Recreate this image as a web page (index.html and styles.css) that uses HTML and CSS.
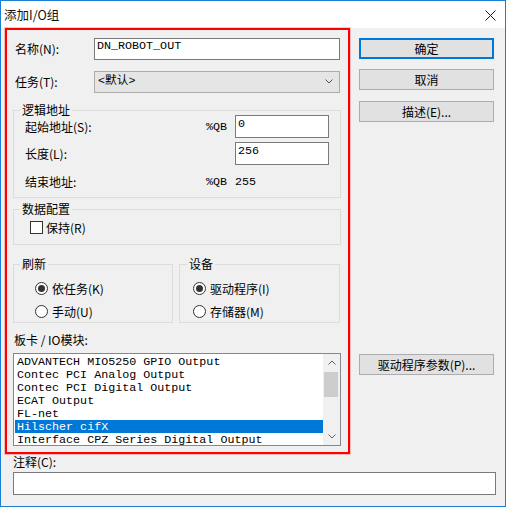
FILE: index.html
```html
<!DOCTYPE html>
<html lang="zh-CN">
<head>
<meta charset="utf-8">
<title>添加I/O组</title>
<link rel="stylesheet" href="styles.css">
</head>
<body>
<div class="window">
  <div class="titlebar">
    <span class="title">添加I/O组</span>
    <svg class="close" width="11" height="11" viewBox="0 0 11 11"><path d="M0.5 0.5L10.5 10.5M10.5 0.5L0.5 10.5" stroke="#1a1a1a" stroke-width="1"/></svg>
  </div>
  <div class="client">
    <div class="top">
      <div class="panel">
        <div class="field">
          <span class="lbl">名称(N):</span>
          <div class="input name-input mono">DN_ROBOT_OUT</div>
        </div>
        <div class="field task-field">
          <span class="lbl">任务(T):</span>
          <div class="combo"><span class="mono">&lt;默认&gt;</span><svg class="chev" width="8" height="5" viewBox="0 0 8 5"><path d="M0.5 0.5L4 4L7.5 0.5" fill="none" stroke="#555" stroke-width="1"/></svg></div>
        </div>

        <div class="group g-logic">
          <div class="gtitle">逻辑地址</div>
          <div class="addr-row r1"><span>起始地址(S):</span><span class="mono">%QB</span><div class="input small mono">0</div></div>
          <div class="addr-row r2"><span>长度(L):</span><span></span><div class="input small mono">256</div></div>
          <div class="addr-row r3"><span>结束地址:</span><span class="mono">%QB</span><span class="mono val">255</span></div>
        </div>

        <div class="group g-data">
          <div class="gtitle">数据配置</div>
          <div class="opt check-row"><span class="checkbox"></span><span>保持(R)</span></div>
        </div>

        <div class="group-pair">
          <div class="group g-refresh">
            <div class="gtitle">刷新</div>
            <div class="opt radio-row first"><span class="radio on"></span><span>依任务(K)</span></div>
            <div class="opt radio-row"><span class="radio"></span><span>手动(U)</span></div>
          </div>
          <div class="group g-device">
            <div class="gtitle">设备</div>
            <div class="opt radio-row first"><span class="radio on"></span><span>驱动程序(I)</span></div>
            <div class="opt radio-row"><span class="radio"></span><span>存储器(M)</span></div>
          </div>
        </div>

        <div class="list-label">板卡 / IO模块:</div>
        <div class="listbox">
          <div class="items mono">
            <div class="item">ADVANTECH MIO5250 GPIO Output</div>
            <div class="item">Contec PCI Analog Output</div>
            <div class="item">Contec PCI Digital Output</div>
            <div class="item">ECAT Output</div>
            <div class="item">FL-net</div>
            <div class="item sel">Hilscher cifX</div>
            <div class="item">Interface CPZ Series Digital Output</div>
          </div>
          <div class="vscroll">
            <div class="sb-btn"><svg width="8" height="5" viewBox="0 0 8 5"><path d="M0.5 4.5L4 1L7.5 4.5" fill="none" stroke="#606060" stroke-width="1"/></svg></div>
            <div class="sb-track"><div class="sb-thumb"></div></div>
            <div class="sb-btn"><svg width="8" height="5" viewBox="0 0 8 5"><path d="M0.5 0.5L4 4L7.5 0.5" fill="none" stroke="#606060" stroke-width="1"/></svg></div>
          </div>
        </div>
      </div>

      <div class="buttons">
        <div class="btn default">确定</div>
        <div class="btn b-cancel">取消</div>
        <div class="btn b-desc">描述(E)...</div>
        <div class="btn b-driver">驱动程序参数(P)...</div>
      </div>
    </div>

    <div class="comment-label">注释(C):</div>
    <div class="input comment-input"></div>
  </div>
</div>
</body>
</html>
```
FILE: styles.css
```css
* { box-sizing: border-box; }
html, body { margin: 0; padding: 0; }
body {
  width: 506px;
  height: 507px;
  overflow: hidden;
  background: #f0f0f0;
  font-family: "Noto Sans CJK SC", "Liberation Sans", sans-serif;
  font-size: 12px;
  line-height: 14px;
  color: #000;
}
.mono {
  font-family: "Liberation Mono", "Noto Sans CJK SC", monospace;
  font-size: 11.7px;
}
.window {
  width: 506px;
  height: 507px;
  border: 1px solid #1a7fd4;
  display: flex;
  flex-direction: column;
  background: #f0f0f0;
}
.titlebar {
  flex: none;
  height: 27px;
  background: #fff;
  display: flex;
  align-items: center;
  justify-content: space-between;
  padding: 0 9px 0 3px;
}
.title { font-size: 12.5px; color: #111; }
.close { display: block; margin-top: 1px; }

.client { flex: 1; padding-left: 4px; }
.top { display: flex; height: 426px; }

.panel {
  width: 345px;
  height: 426px;
  border: 2px solid #ff0000;
  box-shadow: 0 0 0 1px rgba(255, 90, 90, 0.35);
  padding: 8px 7px 0 6px;
}
.field { display: flex; align-items: center; height: 22px; }
.task-field { margin-top: 11px; }
.lbl { flex: 0 0 81px; padding-left: 2px; }

.input {
  background: #fff;
  border: 1px solid #7a7a7a;
  padding: 0 2px;
  line-height: 14px;
  white-space: pre;
}
.name-input { width: 246px; height: 22px; }
.combo {
  width: 246px;
  height: 22px;
  background: #e5e5e5;
  border: 1px solid #acacac;
  display: flex;
  align-items: center;
  justify-content: space-between;
  padding: 0 6px 0 3px;
}
.combo span { margin-top: -3px; }
.chev { display: block; margin-top: -2px; }

.group {
  border: 1px solid #dcdcdc;
}
.gtitle {
  width: fit-content;
  height: 14px;
  margin-top: -8px;
  padding: 0 2px;
  background: #f0f0f0;
}
.g-logic { margin-top: 17px; padding: 0 11px 4px 11px; }
.g-logic .gtitle { margin-left: -5px; }
.addr-row {
  display: grid;
  grid-template-columns: 1fr 29px 94px;
  align-items: center;
  height: 23px;
}
.addr-row.r1 { margin-top: -2px; }
.addr-row.r2 { margin-top: 4px; }
.addr-row.r3 { margin-top: 5px; }
.input.small { height: 23px; padding-top: 1px; align-self: stretch; }

.g-data { margin-top: 11px; padding: 0 0 10px 16px; }
.g-data .gtitle { margin-left: -10px; }
.opt { display: flex; align-items: center; height: 13px; }
.check-row { margin-top: 5px; }
.checkbox {
  width: 13px; height: 13px;
  border: 1px solid #333;
  background: #fff;
  margin-right: 3px;
  flex: none;
}

.group-pair {
  display: grid;
  grid-template-columns: 160px 161px;
  column-gap: 6px;
  margin-top: 19px;
}
.g-refresh { padding: 0 0 4px 21px; }
.g-refresh .gtitle { margin-left: -15px; }
.g-device { padding: 0 0 4px 13px; }
.g-device .gtitle { margin-left: -6px; }
.radio-row { margin-top: 10px; }
.radio-row.first { margin-top: 11px; }
.radio {
  width: 13px; height: 13px;
  border: 1px solid #333;
  border-radius: 50%;
  background: #fff;
  margin-right: 4px;
  flex: none;
  display: flex;
  align-items: center;
  justify-content: center;
}
.radio.on::after {
  content: "";
  width: 7px; height: 7px;
  border-radius: 50%;
  background: #333;
}

.list-label { margin-top: 10px; padding-left: 1px; }
.listbox {
  margin-top: 6px;
  width: 328px;
  height: 93px;
  border: 1px solid #828790;
  background: #fff;
  display: flex;
  overflow: hidden;
}
.items { flex: 1; padding: 1px 0 0 1px; overflow: hidden; }
.item {
  height: 13px;
  line-height: 15px;
  padding-left: 2px;
  white-space: pre;
}
.item.sel { background: #0078d7; color: #fff; }
.vscroll {
  flex: 0 0 17px;
  background: #f0f0f0;
  display: flex;
  flex-direction: column;
}
.sb-btn {
  height: 17px;
  display: flex;
  align-items: center;
  justify-content: center;
  flex: none;
}
.sb-btn svg { display: block; }
.sb-track { flex: 1; padding: 1px 2px 0 1px; }
.sb-thumb { height: 25px; background: #cdcdcd; }

.buttons {
  margin-left: 9px;
  width: 135px;
  padding-top: 10px;
  display: flex;
  flex-direction: column;
}
.btn {
  height: 21px;
  background: #e1e1e1;
  border: 1px solid #adadad;
  display: flex;
  align-items: center;
  justify-content: center;
  flex: none;
}
.btn.default { border: 2px solid #0078d7; }
.b-cancel { margin-top: 10px; }
.b-desc { margin-top: 11px; }
.b-driver { margin-top: 232px; }

.comment-label { margin-top: 1px; padding-left: 8px; height: 14px; }
.comment-input {
  margin: 3px 0 0 8px;
  width: 483px;
  height: 23px;
}
```
